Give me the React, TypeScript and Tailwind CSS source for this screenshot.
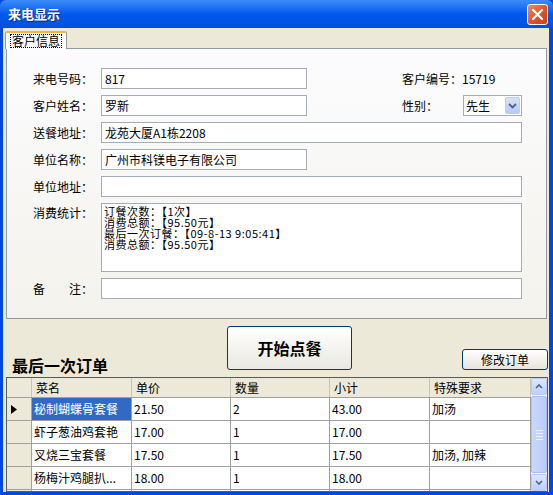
import React from 'react';

const font = "font-['Noto_Sans_CJK_SC','Liberation_Sans',sans-serif]";

function Field({ w, value }: { w: string; value?: string }) {
  return (
    <div
      className={`${w} h-[21px] bg-white border border-[#A5ACB5] pl-[3px] flex items-center text-[12px] leading-none text-black`}
    >
      {value}
    </div>
  );
}

function Label({ text }: { text: React.ReactNode }) {
  return <div className="w-[68px] text-[12px] text-black leading-none">{text}</div>;
}

const rows = [
  { name: '秘制蝴蝶骨套餐', price: '21.50', qty: '2', sub: '43.00', note: '加汤', sel: true },
  { name: '虾子葱油鸡套艳', price: '17.00', qty: '1', sub: '17.00', note: '' },
  { name: '叉烧三宝套餐', price: '17.50', qty: '1', sub: '17.50', note: '加汤, 加辣' },
  { name: '杨梅汁鸡腿扒...', price: '18.00', qty: '1', sub: '18.00', note: '' },
];

function App() {
  return (
    <div className={`w-[553px] h-[495px] flex flex-col bg-[#0048DD] ${font}`}>
      {/* title bar */}
      <div className="h-[28px] flex items-center justify-between pl-[8px] pr-[5px] bg-gradient-to-b from-[#3C8CF8] via-[#0058EE] to-[#0050E0] rounded-t-[6px]">
        <span className="text-white font-bold text-[13px] [text-shadow:1px_1px_0_#0A2A80]">来电显示</span>
        <div className="w-[21px] h-[21px] rounded-[3px] border border-white bg-gradient-to-br from-[#F08A64] via-[#E0562B] to-[#C6401A] flex items-center justify-center">
          <svg width="13" height="13" viewBox="0 0 13 13">
            <path d="M2 2 L11 11 M11 2 L2 11" stroke="white" strokeWidth="2.2" strokeLinecap="round" />
          </svg>
        </div>
      </div>

      {/* body */}
      <div className="flex-1 ml-[3px] mr-[4px] mb-[3px] bg-[#ECE9D8] flex flex-col">
        {/* tab strip */}
        <div className="pt-[3px] pl-[2px] flex">
          <div className="relative z-10 -mb-px w-[62px] h-[18px] bg-[#FCFCFE] border border-b-0 border-[#919B9C] border-t-[2px] border-t-[#F4B73C] rounded-t-[2px] flex items-center justify-center">
            <span className="border border-dotted border-black px-[1px] text-[12px] leading-[12px] text-black">客户信息</span>
          </div>
        </div>

        {/* tab panel */}
        <div className="ml-[3px] mr-[2px] h-[271px] border border-[#919B9C] bg-gradient-to-b from-[#FCFCFE] to-[#F3F2EC] pt-[19px] pl-[26px] flex flex-col gap-[6px]">
          <div className="flex items-center">
            <Label text="来电号码：" />
            <Field w="w-[206px]" value="817" />
            <div className="ml-[95px] text-[12px] text-black leading-none">客户编号：15719</div>
          </div>
          <div className="flex items-center">
            <Label text="客户姓名：" />
            <Field w="w-[206px]" value="罗新" />
            <div className="ml-[95px] w-[61px] text-[12px] text-black leading-none">性别：</div>
            <div className="w-[59px] h-[21px] bg-white border border-[#A5ACB5] flex items-center justify-between pl-[2px] pr-[1px]">
              <span className="text-[12px] leading-none text-black">先生</span>
              <div className="w-[15px] h-[17px] rounded-[2px] bg-gradient-to-b from-[#D6E3FE] to-[#B4C9F8] border border-[#B8CCF7] flex items-center justify-center">
                <svg width="9" height="6" viewBox="0 0 9 6">
                  <path d="M1 1 L4.5 4.5 L8 1" stroke="#4D6185" strokeWidth="1.8" fill="none" />
                </svg>
              </div>
            </div>
          </div>
          <div className="flex items-center">
            <Label text="送餐地址：" />
            <Field w="w-[421px]" value="龙苑大厦A1栋2208" />
          </div>
          <div className="flex items-center">
            <Label text="单位名称：" />
            <Field w="w-[206px]" value="广州市科镁电子有限公司" />
          </div>
          <div className="flex items-center">
            <Label text="单位地址：" />
            <Field w="w-[421px]" />
          </div>
          <div className="flex items-start">
            <div className="pt-[4px]">
              <Label text="消费统计：" />
            </div>
            <div className="w-[421px] h-[69px] bg-white border border-[#A5ACB5] pl-[2px] pt-[2px] text-[11px] leading-[11px] tracking-[0.5px] text-black">
              <div>订餐次数：【1次】</div>
              <div>消费总额：【95.50元】</div>
              <div>最后一次订餐：【09-8-13 9:05:41】</div>
              <div>消费总额：【95.50元】</div>
            </div>
          </div>
          <div className="flex items-center">
            <Label
              text={
                <span className="flex w-[60px] justify-between">
                  <span>备</span>
                  <span>注：</span>
                </span>
              }
            />
            <Field w="w-[421px]" />
          </div>
        </div>

        {/* action row */}
        <div className="h-[58px] flex items-end pl-[9px] pr-[1px]">
          <div className="w-[215px] pb-[4px] text-[16px] font-bold leading-none text-black">最后一次订单</div>
          <div className="self-start mt-[7px] w-[125px] h-[44px] rounded-[3px] border border-[#003C74] bg-gradient-to-b from-[#FFFFFF] to-[#E9E8E1] flex items-center justify-center text-[16px] font-bold text-black">
            开始点餐
          </div>
          <div className="ml-auto mb-[7px] w-[86px] h-[21px] rounded-[3px] border border-[#003C74] bg-gradient-to-b from-[#FFFFFF] to-[#E6E4DB] flex items-center justify-center text-[12px] text-black leading-none">
            修改订单
          </div>
        </div>

        {/* grid */}
        <div className="ml-[3px] mr-[1px] flex-1 border border-[#5A5A5A] bg-white flex overflow-hidden">
          <div className="flex flex-col">
            <div className="grid grid-cols-[25px_100px_99px_99px_100px_101px] h-[20px] bg-[#ECE9D8] border-b border-[#A0A0A0]">
              <div className="border-r border-[#C8C5B8]" />
              {['菜名', '单价', '数量', '小计', '特殊要求'].map((h) => (
                <div key={h} className="border-r border-[#C8C5B8] pl-[4px] flex items-center text-[12px] leading-none text-black">
                  {h}
                </div>
              ))}
            </div>
            {rows.map((r, i) => (
              <div key={i} className="grid grid-cols-[25px_100px_99px_99px_100px_101px] h-[23px]">
                <div className="bg-[#ECE9D8] border-r border-b border-[#A0A0A0] flex items-center pl-[4px]">
                  {r.sel && (
                    <svg width="6" height="9" viewBox="0 0 6 9">
                      <path d="M0 0 L6 4.5 L0 9 Z" fill="black" />
                    </svg>
                  )}
                </div>
                <div
                  className={`border-r border-b border-[#A0A0A0] pl-[2px] flex items-center text-[12px] leading-none ${
                    r.sel ? 'bg-[#316AC5] text-white' : 'text-black'
                  }`}
                >
                  {r.name}
                </div>
                <div className="border-r border-b border-[#A0A0A0] pl-[2px] flex items-center text-[12px] leading-none text-black">{r.price}</div>
                <div className="border-r border-b border-[#A0A0A0] pl-[2px] flex items-center text-[12px] leading-none text-black">{r.qty}</div>
                <div className="border-r border-b border-[#A0A0A0] pl-[2px] flex items-center text-[12px] leading-none text-black">{r.sub}</div>
                <div className="border-r border-b border-[#A0A0A0] pl-[2px] flex items-center text-[12px] leading-none text-black">{r.note}</div>
              </div>
            ))}
            <div className="grid grid-cols-[25px_100px_99px_99px_100px_101px] flex-1">
              <div className="bg-[#ECE9D8] border-r border-[#A0A0A0]" />
              <div className="border-r border-[#A0A0A0]" />
              <div className="border-r border-[#A0A0A0]" />
              <div className="border-r border-[#A0A0A0]" />
              <div className="border-r border-[#A0A0A0]" />
              <div className="border-r border-[#A0A0A0]" />
            </div>
          </div>

          {/* scrollbar */}
          <div className="w-[16px] ml-auto bg-[#F4F3EE] flex flex-col">
            <div className="h-[17px] rounded-[2px] border border-[#B7CAF5] bg-gradient-to-b from-[#DCE7FF] to-[#BBCFF9] flex items-center justify-center">
              <svg width="8" height="5" viewBox="0 0 8 5">
                <path d="M1 4 L4 1 L7 4" stroke="#4D6185" strokeWidth="1.6" fill="none" />
              </svg>
            </div>
            <div className="flex-1 my-px rounded-[2px] border border-[#A8BFF2] bg-gradient-to-r from-[#C9D8FC] to-[#B8CCF8] flex flex-col items-center justify-center gap-[2px]">
              <div className="w-[7px] h-px bg-[#EEF3FF]" />
              <div className="w-[7px] h-px bg-[#EEF3FF]" />
              <div className="w-[7px] h-px bg-[#EEF3FF]" />
              <div className="w-[7px] h-px bg-[#EEF3FF]" />
            </div>
            <div className="h-[17px] rounded-[2px] border border-[#B7CAF5] bg-gradient-to-b from-[#DCE7FF] to-[#BBCFF9] flex items-center justify-center">
              <svg width="8" height="5" viewBox="0 0 8 5">
                <path d="M1 1 L4 4 L7 1" stroke="#4D6185" strokeWidth="1.6" fill="none" />
              </svg>
            </div>
          </div>
        </div>
      </div>
    </div>
  );
}

export default App;
